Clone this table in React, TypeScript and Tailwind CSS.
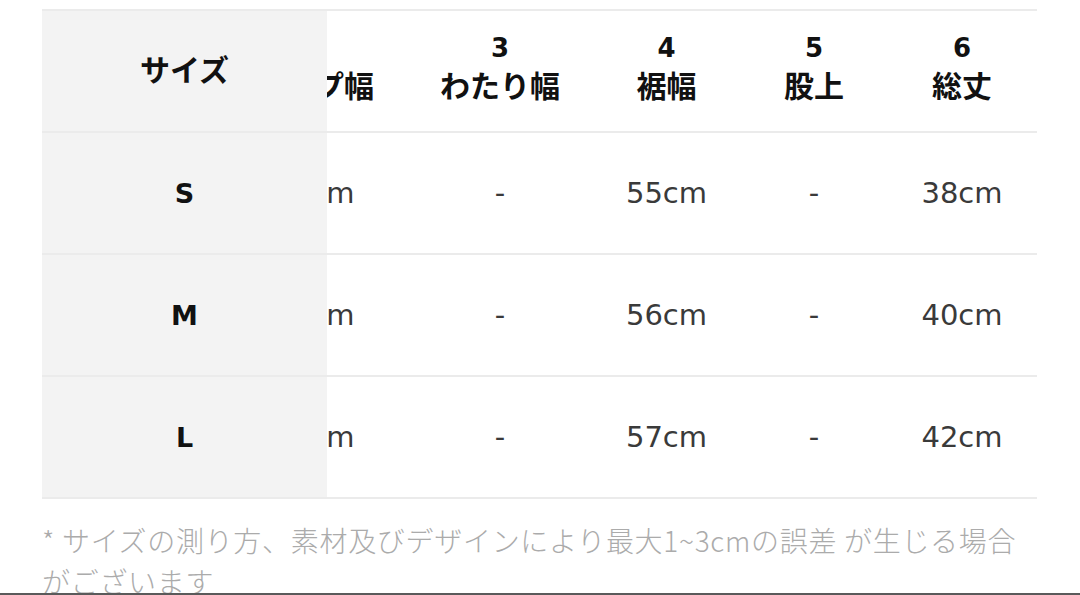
import React from "react";

const cols = [
  { num: "2", label: "ヒップ幅", w: "w-[186px]", vals: ["50cm", "52cm", "54cm"] },
  { num: "3", label: "わたり幅", w: "w-[186px]", vals: ["-", "-", "-"] },
  { num: "4", label: "裾幅", w: "w-[147px]", vals: ["55cm", "56cm", "57cm"] },
  { num: "5", label: "股上", w: "w-[148px]", vals: ["-", "-", "-"] },
  { num: "6", label: "総丈", w: "w-[148px]", vals: ["38cm", "40cm", "42cm"] },
];

const sizes = ["S", "M", "L"];

const latin = "font-['DejaVu_Sans','Noto_Sans_CJK_JP',sans-serif]";
const jp = "font-['Noto_Sans_CJK_JP',sans-serif]";

export default function App() {
  return (
    <div className="relative w-[1080px] h-[595px] overflow-hidden bg-white">
      <div className="ml-[42px] w-[995px] pt-[9px]">
        <div className="border-t-2 border-[#ebebeb]">
          {/* header */}
          <div className="flex h-[122px] border-b-2 border-[#ebebeb]">
            <div className="w-[285px] shrink-0 bg-[#f3f3f3] flex items-center justify-center pb-[6px]">
              <span className={`${jp} text-[30px] font-bold text-[#111] leading-none`}>サイズ</span>
            </div>
            <div className="flex-1 overflow-hidden">
              <div className="ml-[-106px] flex h-full">
                {cols.map((c) => (
                  <div key={c.num} className={`${c.w} shrink-0 flex flex-col items-center justify-center pb-[11px]`}>
                    <span className={`${latin} text-[26px] font-bold text-[#111] leading-[40px]`}>{c.num}</span>
                    <span className={`${jp} text-[30px] font-bold text-[#111] leading-[40px] mt-[-4px] whitespace-nowrap`}>{c.label}</span>
                  </div>
                ))}
              </div>
            </div>
          </div>
          {/* rows */}
          {sizes.map((s, ri) => (
            <div key={s} className="flex h-[122px] border-b-2 border-[#ebebeb]">
              <div className="w-[285px] shrink-0 bg-[#f3f3f3] flex items-center justify-center">
                <span className={`${latin} text-[27px] font-bold text-[#111] leading-none`}>{s}</span>
              </div>
              <div className="flex-1 overflow-hidden">
                <div className="ml-[-106px] flex h-full">
                  {cols.map((c) => (
                    <div key={c.num} className={`${c.w} shrink-0 flex items-center justify-center`}>
                      <span className={`${latin} text-[29px] text-[#3a3a3a] leading-none`}>{c.vals[ri]}</span>
                    </div>
                  ))}
                </div>
              </div>
            </div>
          ))}
        </div>
        <div className={`${jp} mt-[21px] text-[28px] leading-[41px] tracking-[0.7px] text-[#ababab] font-light`}>
          <div className="whitespace-nowrap">* サイズの測り方、素材及びデザインにより最大1~3cmの誤差 が生じる場合</div>
          <div className="whitespace-nowrap">がございます</div>
        </div>
      </div>
      <div className="absolute left-0 bottom-0 w-full h-[2px] bg-[#5a5a5a]" />
    </div>
  );
}
